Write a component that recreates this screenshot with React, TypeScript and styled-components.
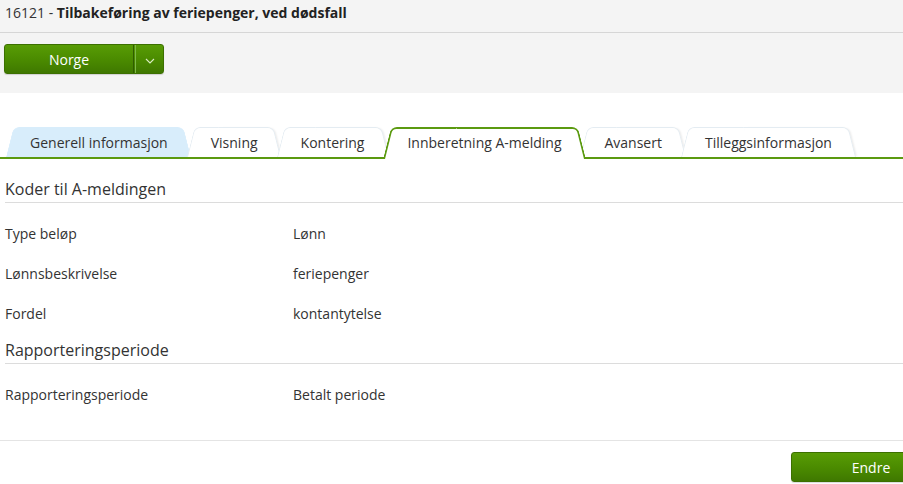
import React from "react";
import styled, { createGlobalStyle, css } from "styled-components";

const GlobalStyle = createGlobalStyle`
  html, body {
    margin: 0;
    padding: 0;
    background: #fff;
    overflow-x: hidden;
  }
  body {
    font-family: "Open Sans", "Liberation Sans", sans-serif;
    color: #333;
    font-size: 14px;
  }
`;

const tabs = [
  "Generell informasjon",
  "Visning",
  "Kontering",
  "Innberetning A-melding",
  "Avansert",
  "Tilleggsinformasjon",
];

const sections = [
  {
    title: "Koder til A-meldingen",
    rows: [
      ["Type beløp", "Lønn"],
      ["Lønnsbeskrivelse", "feriepenger"],
      ["Fordel", "kontantytelse"],
    ],
  },
  {
    title: "Rapporteringsperiode",
    rows: [["Rapporteringsperiode", "Betalt periode"]],
  },
];

const App: React.FC = () => {
  return (
    <Page>
      <GlobalStyle />
      <Header>
        <span>16121 - </span>
        <strong>Tilbakeføring av feriepenger, ved dødsfall</strong>
      </Header>
      <Toolbar>
        <SplitButton>
          <MainPart>Norge</MainPart>
          <Divider />
          <CaretPart>
            <svg width="10" height="6" viewBox="0 0 10 6">
              <path d="M1 1l4 4 4-4" fill="none" stroke="#d8ecc0" strokeWidth="1.1" />
            </svg>
          </CaretPart>
        </SplitButton>
      </Toolbar>
      <Content>
        <TabRow>
          {tabs.map((t, i) => (
            <Tab key={t} $variant={i === 0 ? "blue" : i === 3 ? "active" : "plain"}>
              {t}
            </Tab>
          ))}
        </TabRow>
        {sections.map((s) => (
          <Section key={s.title}>
            <SectionTitle>{s.title}</SectionTitle>
            <Rows>
              {s.rows.map(([label, value]) => (
                <Row key={label}>
                  <span>{label}</span>
                  <span>{value}</span>
                </Row>
              ))}
            </Rows>
          </Section>
        ))}
        <Footer>
          <ActionButton>Endre</ActionButton>
        </Footer>
      </Content>
    </Page>
  );
};

const Page = styled.div`
  width: 903px;
  min-height: 484px;
`;

const Header = styled.div`
  background: #f4f4f4;
  height: 33px;
  box-sizing: border-box;
  padding: 3px 5px 0;
  line-height: 20px;
  font-size: 14px;
  color: #333;
  border-bottom: 1px solid #d6d6d6;
  strong {
    font-weight: 700;
    color: #222;
  }
`;

const Toolbar = styled.div`
  background: #f4f4f4;
  height: 60px;
  padding: 11px 4px 0;
  box-sizing: border-box;
`;

const greenFill = css`
  background: linear-gradient(to bottom, #589c05 0%, #4a8a00 55%, #3f7800 100%);
  color: #fff;
  border: 1px solid #3c7000;
  border-radius: 3px;
  box-shadow: 0 1px 1px rgba(0, 0, 0, 0.15);
`;

const SplitButton = styled.div`
  ${greenFill};
  display: inline-flex;
  width: 160px;
  height: 30px;
  box-sizing: border-box;
  overflow: hidden;
`;

const MainPart = styled.div`
  flex: 1;
  display: flex;
  align-items: center;
  justify-content: center;
  font-size: 14px;
  padding-top: 1px;
`;

const Divider = styled.div`
  width: 1px;
  border-left: 1px solid #2f5c00;
  border-right: 1px solid #7fb84a;
`;

const CaretPart = styled.div`
  width: 27px;
  display: flex;
  align-items: center;
  justify-content: center;
  padding-top: 3px;
`;

const Content = styled.div`
  padding-top: 34px;
`;

const TabRow = styled.div`
  display: flex;
  padding-left: 9px;
  border-bottom: 2px solid #5b9a10;
  height: 30px;
  margin-bottom: 13px;
`;

const Tab = styled.div<{ $variant: "blue" | "active" | "plain" }>`
  position: relative;
  isolation: isolate;
  height: 30px;
  line-height: 32px;
  padding: 0 21px;
  font-size: 14px;
  color: #333;
  white-space: nowrap;
  margin-right: 1px;

  &::before,
  &::after {
    content: "";
    position: absolute;
    top: 0;
    bottom: 0;
    width: 62%;
    z-index: -1;
    box-sizing: border-box;
    background: ${(p) => (p.$variant === "blue" ? "#d8edfb" : "#fff")};
    border: 1px solid ${(p) => (p.$variant === "blue" ? "#d8edfb" : "#e4ecf2")};
    border-bottom: none;
  }
  &::before {
    left: -3px;
    border-right: none;
    border-radius: 6px 0 0 0;
    transform: skewX(-14deg);
    transform-origin: bottom left;
  }
  &::after {
    right: -3px;
    border-left: none;
    border-radius: 0 6px 0 0;
    transform: skewX(14deg);
    transform-origin: bottom right;
    box-shadow: ${(p) => (p.$variant === "plain" ? "2px 0 2px -1px rgba(0,0,0,0.08)" : "none")};
  }

  ${(p) =>
    p.$variant === "active" &&
    css`
      z-index: 2;
      &::before,
      &::after {
        bottom: -2px;
        border-width: 2px;
        border-color: #5b9a10;
        background: #fff;
      }
    `}
`;

const Section = styled.div`
  padding: 6px 0 0 5px;
`;

const SectionTitle = styled.div`
  font-size: 16px;
  line-height: 22px;
  padding-bottom: 2px;
  border-bottom: 1px solid #dcdcdc;
  color: #333;
`;

const Rows = styled.div`
  padding-top: 10px;
`;

const Row = styled.div`
  display: grid;
  grid-template-columns: 288px 1fr;
  height: 40px;
  align-items: center;
  font-size: 14px;
`;

const Footer = styled.div`
  margin-top: 26px;
  border-top: 1px solid #e4e4e4;
  display: flex;
  justify-content: flex-end;
  padding-top: 11px;
  margin-right: -48px;
`;

const ActionButton = styled.button`
  ${greenFill};
  width: 160px;
  height: 30px;
  font-family: inherit;
  font-size: 14px;
  padding: 0;
`;

export default App;
